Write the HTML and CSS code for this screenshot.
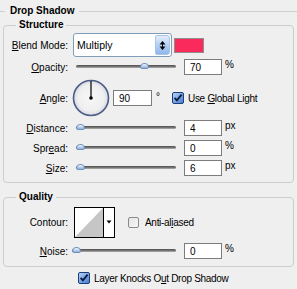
FILE: index.html
```html
<!DOCTYPE html>
<html>
<head>
<meta charset="utf-8">
<link rel="stylesheet" href="styles.css">
</head>
<body>
<div class="dialog">
  <div class="title">
    <span class="title-line lead"></span>
    <span class="title-text">Drop Shadow</span>
    <span class="title-line fill"></span>
  </div>

  <fieldset class="group structure">
    <legend>Structure</legend>

    <div class="row row-blend">
      <span class="lbl"><u>B</u>lend Mode:</span>
      <div class="select">
        <span class="select-value">Multiply</span>
        <span class="select-btn">
          <svg width="9" height="13" viewBox="0 0 9 13"><path d="M4.5 2 L7.5 5.5 L1.5 5.5 Z" fill="#000"/><path d="M4.5 11 L7.5 7.5 L1.5 7.5 Z" fill="#000"/><rect x="4" y="5" width="1" height="3" fill="#000"/></svg>
        </span>
      </div>
      <span class="swatch"></span>
    </div>

    <div class="row row-field">
      <span class="lbl"><u>O</u>pacity:</span>
      <div class="slider"><div class="track"></div><div class="knob" style="left:66px"></div></div>
      <input class="num" type="text" value="70" readonly>
      <span class="unit">%</span>
    </div>

    <div class="row row-angle">
      <span class="lbl"><u>A</u>ngle:</span>
      <svg class="dial" width="38" height="38" viewBox="0 0 38 38">
        <defs>
          <radialGradient id="dg" cx="50%" cy="50%" r="50%">
            <stop offset="0%" stop-color="#f7f7f7"/>
            <stop offset="75%" stop-color="#efefef"/>
            <stop offset="100%" stop-color="#d6d8e0"/>
          </radialGradient>
        </defs>
        <circle cx="19" cy="19" r="17.5" fill="url(#dg)" stroke="#4e5d88" stroke-width="1.6"/>
        <line x1="19" y1="19" x2="19" y2="2" stroke="#000" stroke-width="1.2"/>
        <circle cx="19" cy="19" r="1.8" fill="#000"/>
      </svg>
      <input class="num angle" type="text" value="90" readonly>
      <span class="deg">°</span>
      <span class="check on global">
        <svg width="12" height="12" viewBox="0 0 12 12"><defs><linearGradient id="cb" x1="0" y1="0" x2="1" y2="1"><stop offset="0" stop-color="#b9d6fa"/><stop offset="1" stop-color="#3f7ad0"/></linearGradient></defs><rect x="0.5" y="0.5" width="11" height="11" rx="1.5" fill="url(#cb)" stroke="#1f3e78"/><path d="M2.6 5.8 L4.9 8.4 L9.6 2.6" fill="none" stroke="#0b1a3a" stroke-width="1.8"/></svg>
      </span>
      <span class="check-text">Use <u>G</u>lobal Light</span>
    </div>

    <div class="row row-field">
      <span class="lbl"><u>D</u>istance:</span>
      <div class="slider"><div class="track"></div><div class="knob" style="left:2px"></div></div>
      <input class="num" type="text" value="4" readonly>
      <span class="unit">px</span>
    </div>

    <div class="row row-field gap4">
      <span class="lbl">Spr<u>e</u>ad:</span>
      <div class="slider"><div class="track"></div><div class="knob" style="left:2px"></div></div>
      <input class="num" type="text" value="0" readonly>
      <span class="unit">%</span>
    </div>

    <div class="row row-field gap4">
      <span class="lbl"><u>S</u>ize:</span>
      <div class="slider"><div class="track"></div><div class="knob" style="left:2px"></div></div>
      <input class="num" type="text" value="6" readonly>
      <span class="unit">px</span>
    </div>
  </fieldset>

  <fieldset class="group quality">
    <legend>Quality</legend>

    <div class="row row-contour">
      <span class="lbl">Contour:</span>
      <svg class="contour" width="41" height="31" viewBox="0 0 41 31">
        <rect x="0.5" y="0.5" width="40" height="30" fill="#fff" stroke="#000"/>
        <path d="M1 30 L29 1 L29 30 Z" fill="#c6c6c6"/>
        <line x1="29.5" y1="1" x2="29.5" y2="30" stroke="#000"/>
        <path d="M32.5 13.5 L37.5 13.5 L35 16.5 Z" fill="#000"/>
      </svg>
      <span class="check off aa">
        <svg width="11" height="11" viewBox="0 0 11 11"><defs><linearGradient id="cu" x1="0" y1="0" x2="1" y2="1"><stop offset="0" stop-color="#e2e2e2"/><stop offset="1" stop-color="#fafafa"/></linearGradient></defs><rect x="0.5" y="0.5" width="10" height="10" rx="1.5" fill="url(#cu)" stroke="#8a8a8a"/></svg>
      </span>
      <span class="check-text">Anti-al<u>i</u>ased</span>
    </div>

    <div class="row row-field row-noise">
      <span class="lbl"><u>N</u>oise:</span>
      <div class="slider wide"><div class="track"></div><div class="knob" style="left:2px"></div></div>
      <input class="num" type="text" value="0" readonly>
      <span class="unit">%</span>
    </div>
  </fieldset>

  <div class="row row-knock">
    <span class="check on">
      <svg width="12" height="12" viewBox="0 0 12 12"><rect x="0.5" y="0.5" width="11" height="11" rx="1.5" fill="url(#cb)" stroke="#1f3e78"/><path d="M2.6 5.8 L4.9 8.4 L9.6 2.6" fill="none" stroke="#0b1a3a" stroke-width="1.8"/></svg>
    </span>
    <span class="check-text">Layer Knocks O<u>u</u>t Drop Shadow</span>
  </div>
</div>
</body>
</html>
```
FILE: styles.css
```css
html, body {
  margin: 0;
  padding: 0;
}
body {
  background: #efefef;
  font-family: "Liberation Sans", Arial, sans-serif;
  font-size: 10px;
  color: #000;
  width: 297px;
  height: 289px;
  overflow: hidden;
}
u {
  text-decoration: underline;
  text-underline-offset: 1px;
}

.title {
  display: flex;
  align-items: center;
  height: 14px;
  padding-top: 4px;
}
.title-line {
  height: 1px;
  background: #cfcfcf;
}
.title-line.lead {
  width: 5px;
}
.title-line.fill {
  flex: 1;
}
.title-text {
  font-weight: bold;
  padding: 0 5px;
  line-height: 14px;
}

.group {
  margin: 0 3px;
  padding: 0 0 6px 0;
  border: 1px solid #cdcdcd;
  border-radius: 4px;
  min-width: 0;
}
.group legend {
  font-weight: bold;
  line-height: 14px;
  padding: 0 3px;
  margin-left: 12px;
}
.quality {
  margin-top: 7px;
  padding-bottom: 7px;
}

.row {
  display: flex;
  align-items: center;
}
.lbl {
  width: 64px;
  text-align: right;
  flex: none;
}

.row-blend {
  margin-top: 1px;
  height: 24px;
}
.select {
  margin-left: 5px;
  width: 99px;
  height: 24px;
  box-sizing: border-box;
  border: 1px solid #7f9db9;
  border-radius: 3px;
  background: #fff;
  display: flex;
  align-items: center;
}
.select-value {
  flex: 1;
  padding-left: 3px;
  font-size: 10.5px;
}
.select-btn {
  width: 15px;
  height: 20px;
  margin-right: 1px;
  border-radius: 2px 3px 3px 2px;
  border: 1px solid #a9c4ea;
  box-sizing: border-box;
  background: linear-gradient(to bottom, #e3eefc 0%, #b9d3f6 45%, #8fb6ec 100%);
  display: flex;
  align-items: center;
  justify-content: center;
}
.swatch {
  margin-left: 2px;
  width: 30px;
  height: 15px;
  box-sizing: border-box;
  border: 1px solid #8e8e8e;
  background: #fa2b5c;
}

.row-field {
  margin-top: 3px;
  height: 16px;
}
.row-field.gap4 {
  margin-top: 4px;
}
.row-blend + .row-field {
  margin-top: 2px;
}
.slider {
  position: relative;
  margin-left: 6px;
  width: 104px;
  height: 16px;
  flex: none;
}
.slider.wide {
  margin-left: 2px;
  width: 108px;
}
.track {
  margin: 6px 2px 0 2px;
  height: 3px;
  border-radius: 2px;
  background: linear-gradient(to bottom, #4d4d4d 0%, #7b7b7b 60%, #b4b4b4 100%);
}
.knob {
  position: absolute;
  top: 4px;
  width: 9px;
  height: 6px;
  box-sizing: border-box;
  border: 1px solid #6f8fbd;
  border-radius: 4px 4px 2px 2px;
  background: linear-gradient(to bottom, #f2f7fd 0%, #bcd2ee 55%, #8eaedb 100%);
}
.num {
  margin: 0 0 0 6px;
  width: 38px;
  height: 16px;
  box-sizing: border-box;
  border: 1px solid #7c7c7c;
  padding: 0 0 0 5px;
  background: #fff;
  font-family: "Liberation Sans", Arial, sans-serif;
  font-size: 10px;
  color: #000;
  outline: none;
}
.unit {
  margin-left: 3px;
  align-self: flex-start;
  line-height: 11px;
}

.row-angle {
  margin-top: 4px;
  height: 38px;
}
.dial {
  margin-left: 4px;
  flex: none;
}
.num.angle {
  margin-left: 3px;
  width: 39px;
}
.deg {
  margin-left: 4px;
  align-self: center;
  margin-top: -4px;
}
.check {
  display: flex;
  flex: none;
}
.check.global {
  margin-left: 12px;
}
.check-text {
  margin-left: 4px;
  letter-spacing: -0.3px;
}

.row-contour {
  margin-top: 3px;
  height: 31px;
}
.contour {
  margin-left: 6px;
  flex: none;
}
.check.aa {
  margin-left: 13px;
}
.check.aa + .check-text {
  margin-left: 6px;
}
.row-noise {
  margin-top: 5px;
}

.row-knock {
  margin-top: 5px;
  height: 12px;
  padding-left: 78px;
}
```
